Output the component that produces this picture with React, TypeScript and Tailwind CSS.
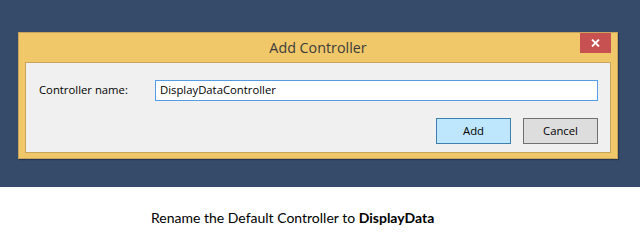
export default function App() {
  return (
    <div className="w-[640px] h-[247px] bg-white flex flex-col">
      <div className="h-[187px] bg-[#364a6a] pt-[32px] pl-[18px]">
        <div className="w-[600px] h-[127px] bg-[#f0c86a] border border-[#c9a45c] flex flex-col shadow-[1px_1px_1px_rgba(0,0,0,0.25)]">
          <div className="h-[29px] flex items-start relative">
            <div className="flex-1 text-center pt-[5px] text-[14.3px] leading-[20px] text-[#3b3b3b] font-['Open_Sans',sans-serif]">
              Add Controller
            </div>
            <div className="absolute right-[6px] top-0 w-[31px] h-[20px] bg-[#c75050] flex items-center justify-center">
              <svg width="9" height="8" viewBox="0 0 9 8">
                <path d="M1 0.5 L8 7.5 M8 0.5 L1 7.5" stroke="white" strokeWidth="1.8" />
              </svg>
            </div>
          </div>
          <div className="mx-[6px] h-[91px] bg-[#f0f0f0] border border-[#c9a45c] flex flex-col font-['Open_Sans',sans-serif] text-[11.3px] text-black">
            <div className="flex items-center mt-[17px] h-[21px]">
              <span className="ml-[13px] w-[116px]">Controller name:</span>
              <div className="w-[443px] h-[21px] border border-[#569de5] bg-white flex items-center pl-[4px]">
                DisplayDataController
              </div>
            </div>
            <div className="flex justify-end gap-[12px] mt-[17px] mr-[12px]">
              <div className="w-[75px] h-[26px] bg-[#bee6fd] border border-[#3c7fb1] flex items-center justify-center">
                Add
              </div>
              <div className="w-[75px] h-[26px] bg-[#dddddd] border border-[#707070] flex items-center justify-center">
                Cancel
              </div>
            </div>
          </div>
        </div>
      </div>
      <div className="pt-[22px] pl-[151px] text-[14px] leading-[17px] text-black font-['Lato',sans-serif]">
        Rename the Default Controller to <span className="font-bold">DisplayData</span>
      </div>
    </div>
  );
}
